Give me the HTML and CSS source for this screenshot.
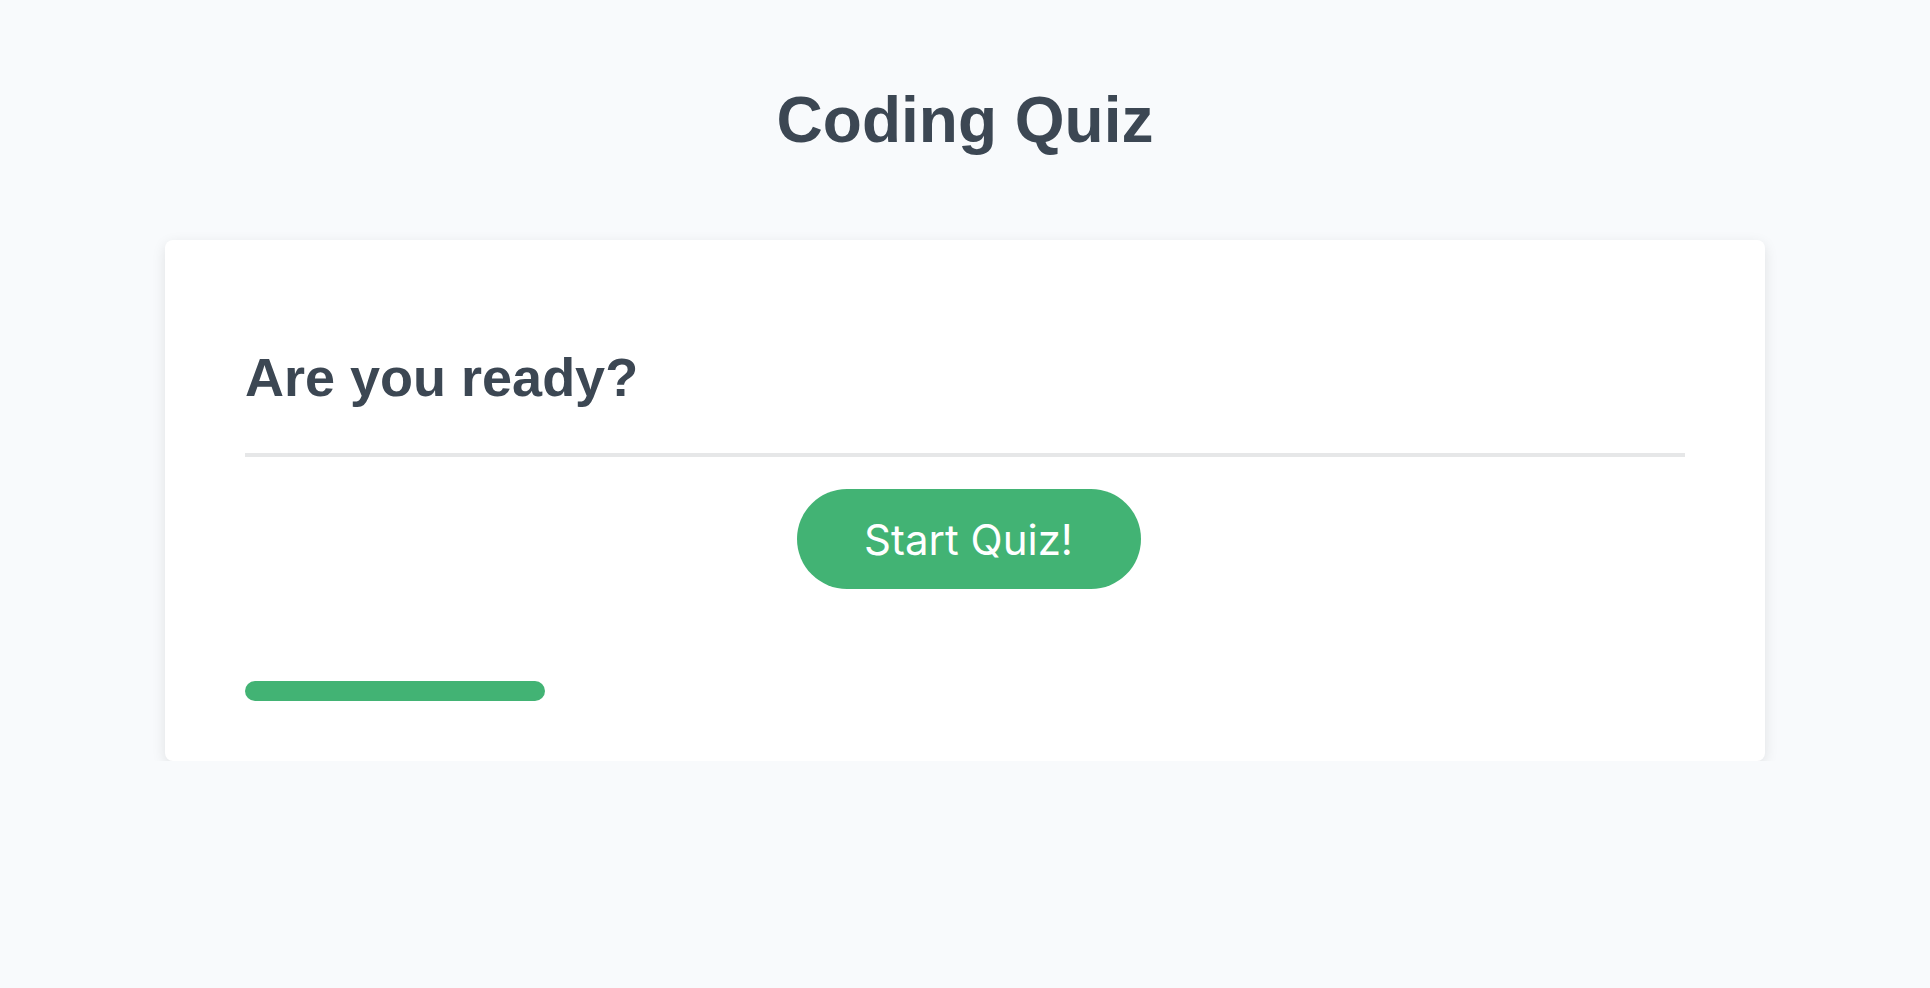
FILE: index.html
```html
<!DOCTYPE html>
<html lang="en">
<head>
<meta charset="utf-8">
<title>Coding Quiz</title>
<link rel="stylesheet" href="styles.css">
</head>
<body>
<main class="page">
  <h1 class="title">Coding Quiz</h1>
  <section class="card">
    <h2 class="question">Are you ready?</h2>
    <hr class="divider">
    <div class="actions">
      <button class="start-btn" type="button">Start Quiz!</button>
    </div>
    <div class="progress"></div>
  </section>
</main>
</body>
</html>
```

FILE: styles.css
```css
* { box-sizing: border-box; }

html, body {
  margin: 0;
  padding: 0;
  background: #f8fafc;
}

body {
  font-family: "Liberation Sans", Arial, sans-serif;
  color: #3c4753;
}

.page {
  display: flex;
  flex-direction: column;
  align-items: center;
  padding-top: 88px;
  gap: 88px;
}

.title {
  margin: 0;
  font-size: 64px;
  line-height: 1;
  font-weight: 700;
  color: #3c4753;
}

.card {
  width: 1600px;
  background: #ffffff;
  border-radius: 8px;
  box-shadow: 0 4px 14px rgba(0, 0, 0, 0.1);
  padding: 110px 80px 60px;
  display: flex;
  flex-direction: column;
}

.question {
  margin: 0;
  font-size: 54px;
  line-height: 1;
  font-weight: 700;
  color: #3c4753;
}

.divider {
  margin: 49px 0 0;
  border: none;
  height: 4px;
  background: #e6e7e8;
}

.actions {
  display: flex;
  justify-content: center;
  margin-top: 32px;
}

.start-btn {
  width: 344px;
  height: 100px;
  border: none;
  border-radius: 50px;
  background: #42b374;
  color: #ffffff;
  font-family: Inter, "Noto Sans", sans-serif;
  font-size: 42px;
  font-weight: 400;
  cursor: pointer;
  margin-left: 7px;
}

.progress {
  margin-top: 92px;
  width: 300px;
  height: 20px;
  border-radius: 10px;
  background: #42b374;
}
```
